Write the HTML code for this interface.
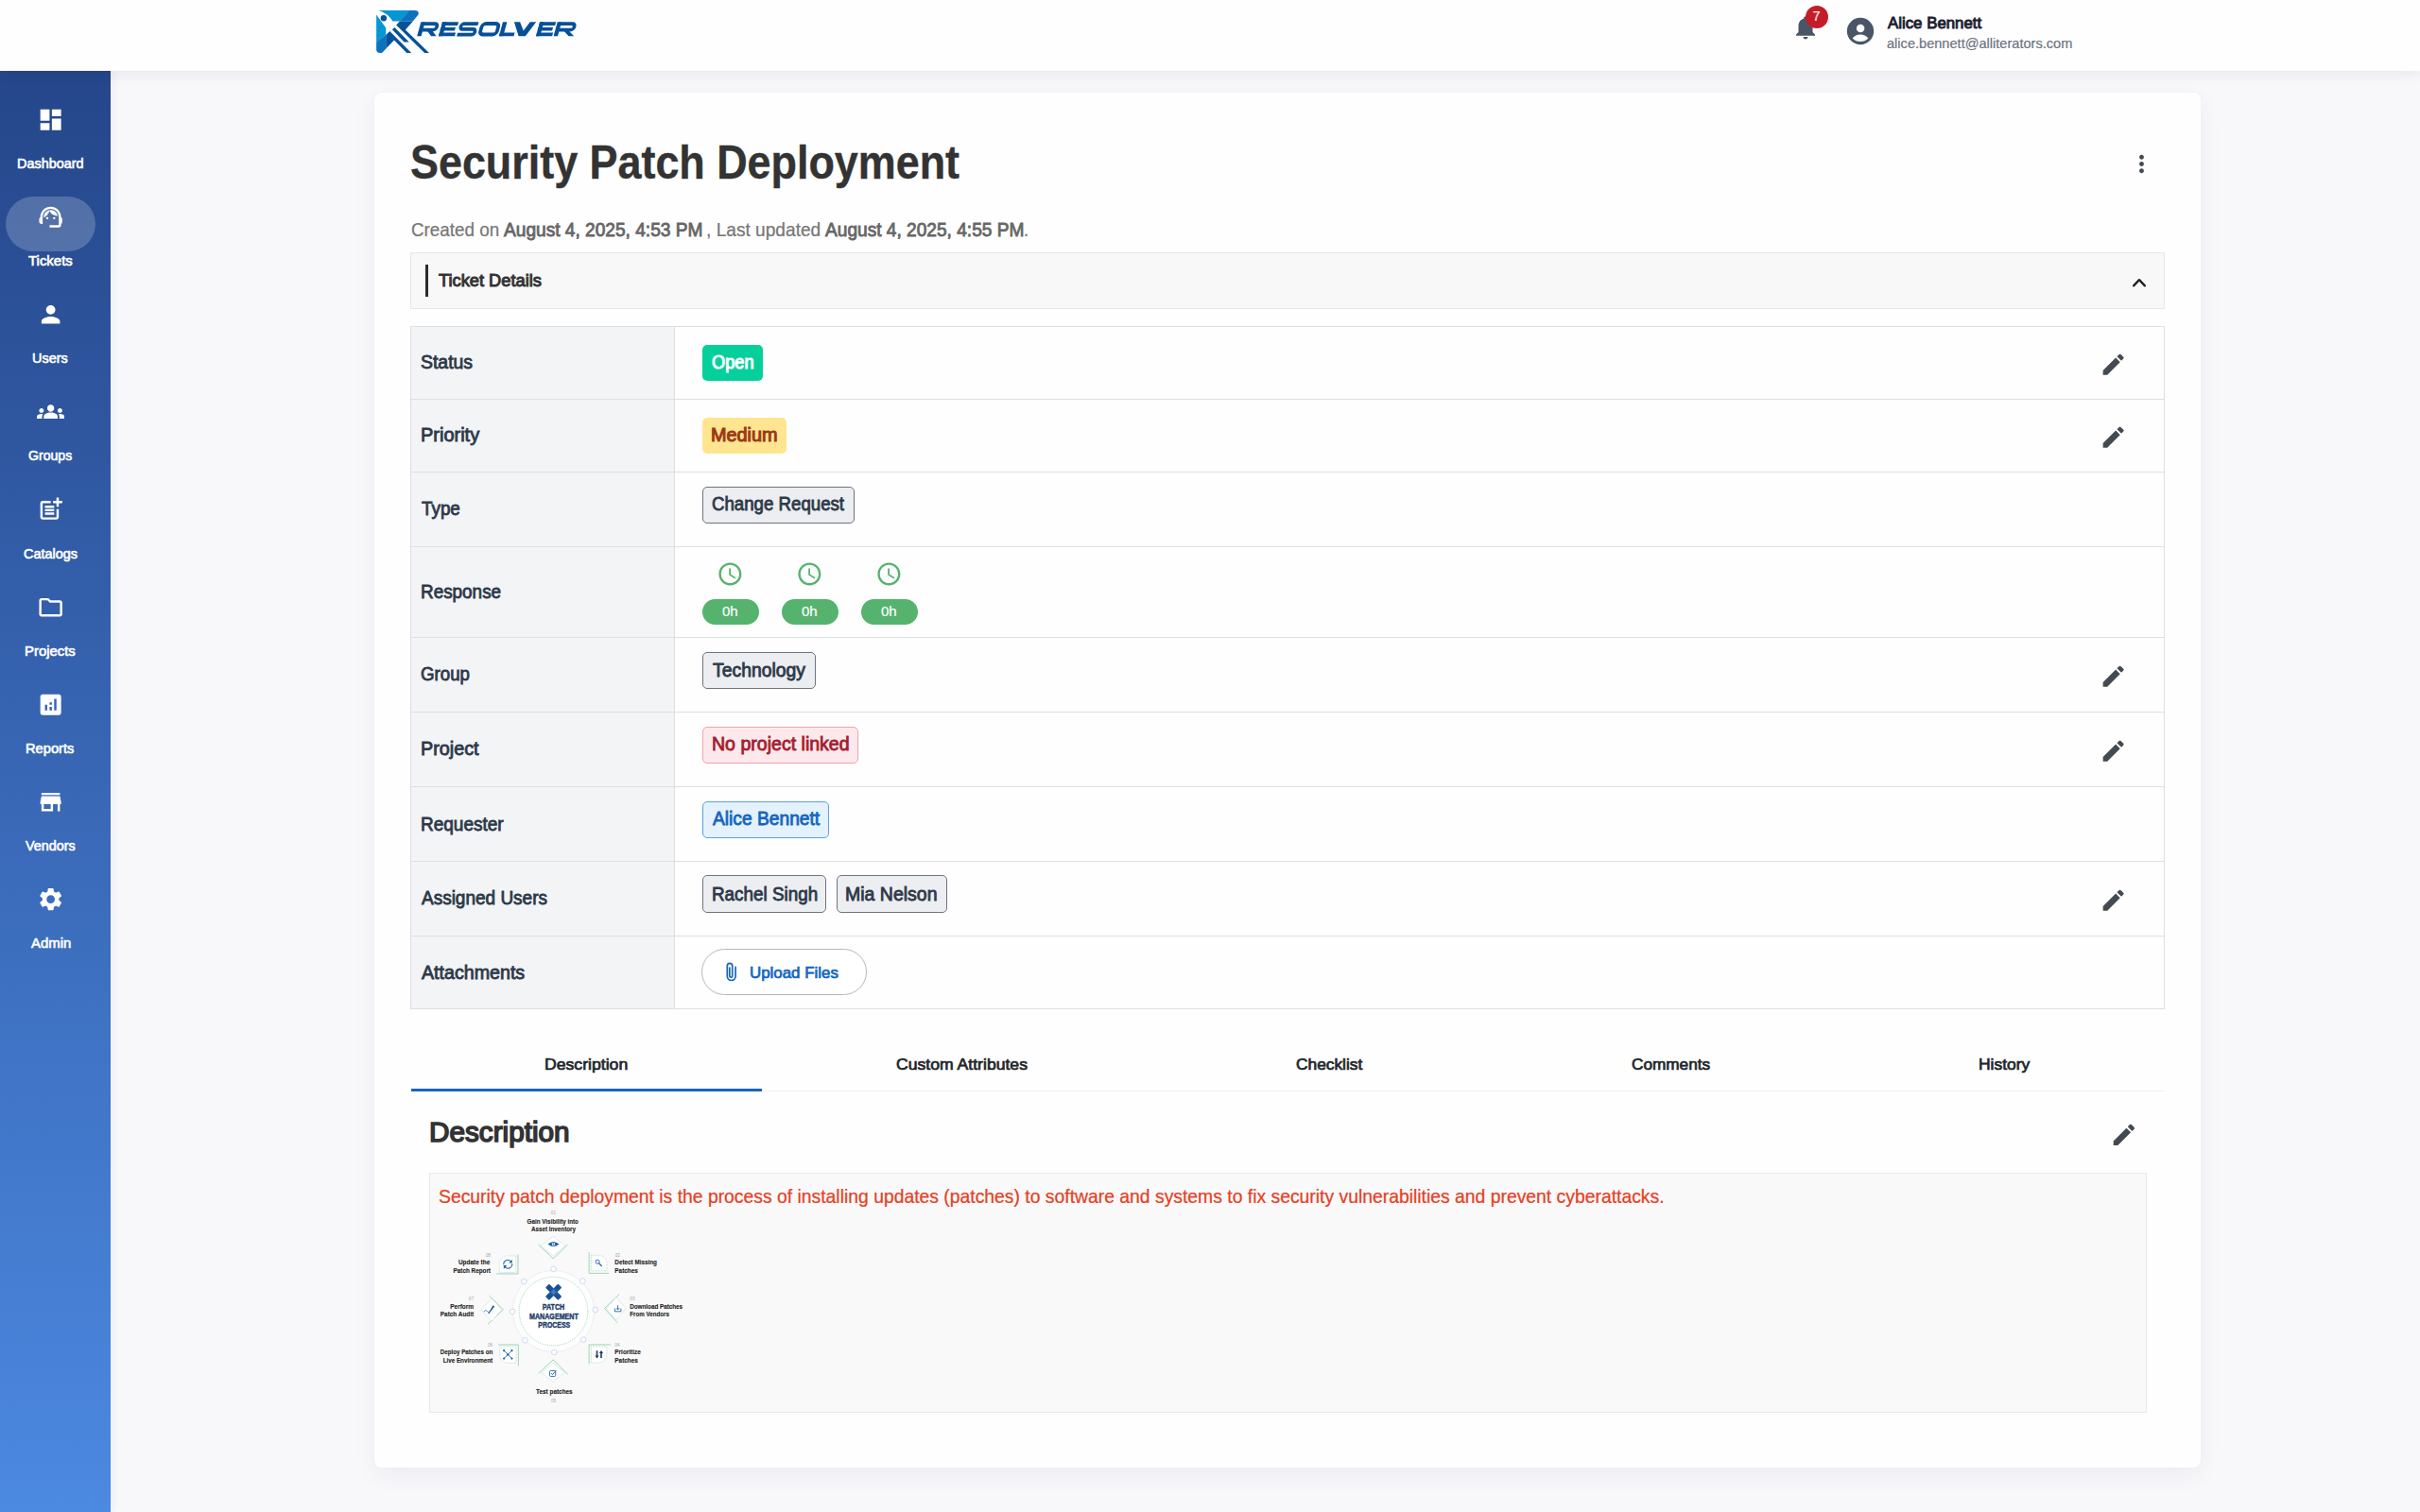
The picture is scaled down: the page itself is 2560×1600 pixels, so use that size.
<!DOCTYPE html>
<html lang="en">
<head>
<meta charset="utf-8">
<title>Security Patch Deployment - Resolver</title>
<style>
*{box-sizing:border-box}
html,body{margin:0;padding:0}
body{width:2560px;height:1600px;overflow:hidden;background:#f8f8fb;font-family:"Liberation Sans",sans-serif;position:relative}
.t{position:absolute;white-space:nowrap;line-height:1;display:block;transform-origin:0 0}
.abs{position:absolute}
header{position:absolute;left:0;top:0;width:2560px;height:74.5px;background:#fefefe;box-shadow:0 3px 14px rgba(40,40,70,.085);z-index:3}
nav{position:absolute;left:0;top:74px;width:116.5px;height:1526px;background:linear-gradient(180deg,#25468a 0%,#4c89e1 100%);box-shadow:2px 0 8px rgba(40,40,70,.06);z-index:2}
nav svg{position:absolute;left:38.8px;width:29.3px;height:29.3px;fill:#fff}
.pill{position:absolute;left:6px;top:134px;width:95px;height:58px;border-radius:29px;background:rgba(255,255,255,.2)}
main{position:absolute;left:396px;top:98px;width:1932px;height:1455px;background:#fefefe;border-radius:8px;box-shadow:0 8px 24px rgba(60,60,100,.06),0 0 4px rgba(60,60,100,.025);z-index:1}
.pg{position:absolute;left:0;top:0;width:2560px;height:1600px}
.ln{position:absolute;background:#dddfe3}
.th{position:absolute;left:435px;width:278px;background:#f3f4f6}
.bdg{position:absolute;border-radius:5px}
.sec{background:#eceef1;border:1px solid #6f757c}
.ic{position:absolute;fill:#444a51}
</style>
</head>
<body>
<header>
<svg class="abs" style="left:390px;top:4px;width:230px;height:60px" viewBox="0 0 230 60">
<path fill="#0497d4" d="M10.71,6.94 L43.45,6.94 L33.13,18.53 L25.40,18.53 Q21.03,10.52 10.71,6.94 Z"/>
<path fill="#0b72bd" d="M43.25,6.94 L48.61,6.94 Q53.97,7.14 52.46,11.51 L46.83,18.53 L32.94,18.53 Z"/>
<polygon fill="#03529b" points="32.94,18.45 46.90,18.45 38.81,27.38 63.97,52.06 59.13,52.06 29.17,22.54"/>
<polygon fill="#03529b" points="27.38,24.92 42.78,40.56 37.50,40.56 24.92,27.30"/>
<polygon fill="#0497d4" points="8.13,11.51 18.25,25.40 18.25,33.02 8.13,40.95"/>
<path fill="#0b72bd" d="M8.13,40.87 L18.25,32.94 L18.33,47.50 L14.09,51.98 L11.90,51.98 Q8.13,51.98 8.13,48.21 Z"/>
<polygon fill="#03529b" points="18.25,32.94 22.30,29.09 45.16,52.06 40.28,52.06 26.98,38.41 18.25,47.54"/>
<circle fill="#03529b" cx="15.87" cy="15.28" r="3.17"/>
<g transform="translate(55.3,19.3) skewX(-15.4)" fill="none" stroke="#06509b" stroke-linejoin="miter"><path d="M2.20,0 V14.90" stroke-width="4.4"/><path d="M2.20,1.85 H15.30 a2.9,2.9 0 0 1 2.9,2.9 v0.7 a2.9,2.9 0 0 1 -2.9,2.9 H2.20" stroke-width="3.7"/><polygon fill="#06509b" stroke="none" points="8.00,8.2 13.30,8.2 20.50,14.90 14.90,14.90"/><path d="M24.90,0 V14.90" stroke-width="4.4"/><path d="M22.70,1.85 H39.80 M22.70,7.45 H38.20 M22.70,13.05 H39.80" stroke-width="3.7"/><path d="M61.10,1.85 H46.20 a2.7,2.7 0 0 0 -2.7,2.7 v0.35 a2.7,2.7 0 0 0 2.7,2.7 H57.20 a2.7,2.7 0 0 1 2.7,2.7 v0.35 a2.7,2.7 0 0 1 -2.7,2.7 H42.00" stroke-width="3.7"/><rect x="65.60" y="1.7" width="17.60" height="11.5" rx="3.6" stroke-width="3.8"/><path d="M88.90,0 V14.90" stroke-width="4.4"/><path d="M86.70,13.05 H102.30" stroke-width="3.7"/><polygon fill="#06509b" stroke="none" points="98.6,0 104.8,0 111.0,9.2 115.4,0 121.9,0 114.6,14.9 107.4,14.9"/><path d="M128.00,0 V14.90" stroke-width="4.4"/><path d="M125.80,1.85 H142.90 M125.80,7.45 H141.30 M125.80,13.05 H142.90" stroke-width="3.7"/><path d="M146.60,0 V14.90" stroke-width="4.4"/><path d="M146.60,1.85 H160.70 a2.9,2.9 0 0 1 2.9,2.9 v0.7 a2.9,2.9 0 0 1 -2.9,2.9 H146.60" stroke-width="3.7"/><polygon fill="#06509b" stroke="none" points="152.40,8.2 157.70,8.2 165.90,14.90 160.30,14.90"/></g>
</svg>
<svg class="abs" style="left:1895.1px;top:14px;width:30px;height:30px;fill:#4a5567" viewBox="0 0 24 24"><path d="M12 22c1.1 0 2-.9 2-2h-4c0 1.1.89 2 2 2zm6-6v-5c0-3.07-1.64-5.64-4.5-6.32V4c0-.83-.67-1.5-1.5-1.5s-1.500.67-1.500 1.500v.68C7.63 5.36 6 7.92 6 11v5l-2 2v1h16v-1l-2-2z"/></svg>
<div class="abs" style="left:1910px;top:5.8px;width:24px;height:24px;border-radius:50%;background:#c51d28"></div>
<span class="t" style="left:1917.6px;top:10.0px;font-size:14.6px;color:#fbeaec;transform:scaleX(1.0000);-webkit-text-stroke:0.012em;">7</span>
<svg class="abs" style="left:1952.65px;top:18.1px;width:30px;height:30px" viewBox="0 0 30 30"><circle cx="15" cy="15" r="14.15" fill="#4a5567"/><circle cx="15.1" cy="11.9" r="4.25" fill="#fefefe"/><path d="M6.600,22.600 Q10,18.500 15,18.500 Q20,18.500 23.400,22.600 Q20,26.100 15,26.100 Q10,26.100 6.600,22.600 Z" fill="#fefefe"/></svg>
<span class="t" style="left:1997.1px;top:16.0px;font-size:17.3px;color:#1b2130;transform:scaleX(0.9741);-webkit-text-stroke:0.055em;">Alice Bennett</span><span class="t" style="left:1996.1px;top:39.0px;font-size:14.8px;color:#6b7280;transform:scaleX(0.9854);-webkit-text-stroke:0.012em;">alice.bennett@alliterators.com</span>
</header>
<nav>
  <div class="pill"></div>
  <svg style="top:37.6px" viewBox="0 0 24 24"><path d="M3 13h8V3H3v10zm0 8h8v-6H3v6zm10 0h8V11h-8v10zm0-18v6h8V3h-8z"/></svg>
  <svg style="top:140.8px" viewBox="0 0 24 24"><path d="M21 12.22C21 6.73 16.74 3 12 3c-4.69 0-9 3.65-9 9.28-.6.34-1 .98-1 1.72v2c0 1.1.9 2 2 2h1v-6.1c0-3.87 3.13-7 7-7s7 3.13 7 7V19h-8v2h8c1.1 0 2-.9 2-2v-1.22c.59-.31 1-.92 1-1.64v-2.3c0-.7-.41-1.31-1-1.62z"/><circle cx="9" cy="13" r="1"/><circle cx="15" cy="13" r="1"/><path d="M18 11.03C17.52 8.18 15.04 6 12.05 6c-3.03 0-6.29 2.51-6.03 6.45 2.47-1.01 4.33-3.21 4.86-5.89 1.31 2.63 4 4.44 7.12 4.47z"/></svg>
  <svg style="top:244.0px" viewBox="0 0 24 24"><path d="M12 12c2.21 0 4-1.79 4-4s-1.79-4-4-4-4 1.79-4 4 1.79 4 4 4zm0 2c-2.67 0-8 1.34-8 4v2h16v-2c0-2.66-5.33-4-8-4z"/></svg>
  <svg style="top:347.2px" viewBox="0 0 24 24"><path d="M12 12.75c1.63 0 3.07.39 4.24.9 1.08.48 1.76 1.56 1.76 2.73V18H6v-1.61c0-1.18.68-2.26 1.76-2.73 1.17-.52 2.61-.91 4.24-.91zM4 13c1.1 0 2-.9 2-2s-.9-2-2-2-2 .9-2 2 .9 2 2 2zm1.13 1.1c-.37-.06-.74-.1-1.13-.1-.99 0-1.93.21-2.78.58C.48 14.9 0 15.62 0 16.43V18h4.5v-1.61c0-.83.23-1.61.63-2.29zM20 13c1.1 0 2-.9 2-2s-.9-2-2-2-2 .9-2 2 .9 2 2 2zm4 3.43c0-.81-.48-1.53-1.22-1.85-.85-.37-1.79-.58-2.78-.58-.39 0-.76.04-1.13.1.4.68.63 1.46.63 2.29V18H24v-1.57zM12 6c1.66 0 3 1.34 3 3s-1.34 3-3 3-3-1.34-3-3 1.34-3 3-3z"/></svg>
  <svg style="top:450.4px" viewBox="0 0 24 24"><path d="M17 19.22H5V7h7V5H5c-1.1 0-2 .9-2 2v12c0 1.1.9 2 2 2h12c1.1 0 2-.9 2-2v-7h-2v7.22z"/><path d="M19 2h-2v3h-3c.01.01 0 2 0 2h3v2.99c.01.01 2 0 2 0V7h3V5h-3V2zM7 9h8v2H7zM7 12v2h8v-2h-3zM7 15h8v2H7z"/></svg>
  <svg style="top:553.6px" viewBox="0 0 24 24"><path d="M9.17 6l2 2H20v10H4V6h5.17M10 4H4c-1.1 0-1.99.9-1.99 2L2 18c0 1.1.9 2 2 2h16c1.1 0 2-.9 2-2V8c0-1.1-.9-2-2-2h-8l-2-2z"/></svg>
  <svg style="top:656.8px" viewBox="0 0 24 24"><path d="M19 3H5c-1.1 0-2 .9-2 2v14c0 1.1.9 2 2 2h14c1.1 0 2-.9 2-2V5c0-1.1-.9-2-2-2zM9 17H7v-5h2v5zm4 0h-2v-3h2v3zm0-5h-2v-2h2v2zm4 5h-2V7h2v10z"/></svg>
  <svg style="top:760.0px" viewBox="0 0 24 24"><path d="M20 4H4v2h16V4zm1 10v-2l-1-5H4l-1 5v2h1v6h10v-6h4v6h2v-6h1zm-9 4H6v-4h6v4z"/></svg>
  <svg style="top:863.2px" viewBox="0 0 24 24"><path d="M19.14 12.94c.04-.3.06-.61.06-.94 0-.32-.02-.64-.07-.94l2.03-1.58c.18-.14.23-.41.12-.61l-1.92-3.32c-.12-.22-.37-.29-.59-.22l-2.39.96c-.5-.38-1.03-.7-1.62-.94l-.36-2.54c-.04-.24-.24-.41-.48-.41h-3.84c-.24 0-.43.17-.47.41l-.36 2.54c-.59.24-1.13.57-1.62.94l-2.39-.96c-.22-.08-.47 0-.59.22L2.74 8.87c-.12.21-.08.47.12.61l2.03 1.58c-.05.3-.09.63-.09.94s.02.64.07.94l-2.03 1.58c-.18.14-.23.41-.12.61l1.92 3.32c.12.22.37.29.59.22l2.39-.96c.5.38 1.03.7 1.62.94l.36 2.54c.05.24.24.41.48.41h3.84c.24 0 .44-.17.47-.41l.36-2.54c.59-.24 1.13-.56 1.62-.94l2.39.96c.22.08.47 0 .59-.22l1.92-3.32c.12-.22.07-.47-.12-.61l-2.01-1.58zM12 15.6c-1.98 0-3.6-1.62-3.6-3.6s1.62-3.6 3.6-3.6 3.6 1.62 3.6 3.6-1.62 3.6-3.6 3.6z"/></svg>
<div class="pg" style="top:-74px">
<span class="t" style="left:17.8px;top:166.0px;font-size:14.8px;color:#fff;transform:scaleX(0.9741);-webkit-text-stroke:0.042em;">Dashboard</span><span class="t" style="left:30.1px;top:269.0px;font-size:14.8px;color:#fff;transform:scaleX(1.0104);-webkit-text-stroke:0.042em;">Tickets</span><span class="t" style="left:34.2px;top:372.0px;font-size:14.8px;color:#fff;transform:scaleX(0.9759);-webkit-text-stroke:0.042em;">Users</span><span class="t" style="left:30.2px;top:475.0px;font-size:14.8px;color:#fff;transform:scaleX(0.9527);-webkit-text-stroke:0.042em;">Groups</span><span class="t" style="left:24.7px;top:579.0px;font-size:14.8px;color:#fff;transform:scaleX(0.9768);-webkit-text-stroke:0.042em;">Catalogs</span><span class="t" style="left:26.1px;top:682.0px;font-size:14.8px;color:#fff;transform:scaleX(1.0067);-webkit-text-stroke:0.042em;">Projects</span><span class="t" style="left:27.3px;top:785.0px;font-size:14.8px;color:#fff;transform:scaleX(0.9920);-webkit-text-stroke:0.042em;">Reports</span><span class="t" style="left:27.2px;top:888.0px;font-size:14.8px;color:#fff;transform:scaleX(0.9706);-webkit-text-stroke:0.042em;">Vendors</span><span class="t" style="left:32.6px;top:991.0px;font-size:14.8px;color:#fff;transform:scaleX(1.0069);-webkit-text-stroke:0.042em;">Admin</span>
</div>
</nav>
<main>
<div class="pg" style="left:-396px;top:-98px">
<span class="t" style="left:434.4px;top:147.0px;font-size:50.4px;color:#333;transform:scaleX(0.8905);font-weight:700;-webkit-text-stroke:0.008em;">Security Patch Deployment</span>
<span class="t" style="left:435.1px;top:234.0px;font-size:19.8px;color:#777;transform:scaleX(0.9517);-webkit-text-stroke:0.012em;">Created on</span><span class="t" style="left:533.1px;top:234.0px;font-size:19.8px;color:#666;transform:scaleX(0.9664);-webkit-text-stroke:0.042em;">August 4, 2025, 4:53 PM</span><span class="t" style="left:746.8px;top:234.0px;font-size:19.8px;color:#777;transform:scaleX(0.9669);-webkit-text-stroke:0.012em;">, Last updated</span><span class="t" style="left:873.0px;top:234.0px;font-size:19.8px;color:#666;transform:scaleX(0.9664);-webkit-text-stroke:0.042em;">August 4, 2025, 4:55 PM</span><span class="t" style="left:1082.7px;top:234.0px;font-size:19.8px;color:#777;transform:scaleX(1.0000);-webkit-text-stroke:0.012em;">.</span>
<svg class="ic" style="left:2251.2px;top:159px;width:29px;height:29px" viewBox="0 0 24 24"><path d="M12 8c1.1 0 2-.9 2-2s-.9-2-2-2-2 .9-2 2 .9 2 2 2zm0 2c-1.1 0-2 .9-2 2s.9 2 2 2 2-.9 2-2-.9-2-2-2zm0 6c-1.1 0-2 .9-2 2s.9 2 2 2 2-.9 2-2-.9-2-2-2z"/></svg>

<div class="abs" style="left:434px;top:267px;width:1856px;height:60px;background:#f8f8f9;border:1px solid #e7e7ea"></div>
<div class="abs" style="left:450px;top:280px;width:3.4px;height:34px;background:#2b2b2f"></div>
<span class="t" style="left:463.6px;top:288.0px;font-size:18.4px;color:#333;transform:scaleX(0.9927);-webkit-text-stroke:0.055em;">Ticket Details</span>
<svg class="abs" style="left:2252.7px;top:291.2px;width:20px;height:16px" viewBox="0 0 20 16"><path d="M4.1 11.4 10 5.1l5.9 6.3" fill="none" stroke="#1f2226" stroke-width="2.3" stroke-linecap="round" stroke-linejoin="round"/></svg>
<div class="th" style="top:346px;height:76px"></div>
<div class="th" style="top:423px;height:76px"></div>
<div class="th" style="top:500px;height:78px"></div>
<div class="th" style="top:579px;height:95px"></div>
<div class="th" style="top:675px;height:78px"></div>
<div class="th" style="top:754px;height:78px"></div>
<div class="th" style="top:833px;height:78px"></div>
<div class="th" style="top:912px;height:78px"></div>
<div class="th" style="top:991px;height:76px"></div>
<div class="ln" style="left:434px;top:345px;width:1856px;height:1px"></div>
<div class="ln" style="left:434px;top:422px;width:1856px;height:1px"></div>
<div class="ln" style="left:434px;top:499px;width:1856px;height:1px"></div>
<div class="ln" style="left:434px;top:578px;width:1856px;height:1px"></div>
<div class="ln" style="left:434px;top:674px;width:1856px;height:1px"></div>
<div class="ln" style="left:434px;top:753px;width:1856px;height:1px"></div>
<div class="ln" style="left:434px;top:832px;width:1856px;height:1px"></div>
<div class="ln" style="left:434px;top:911px;width:1856px;height:1px"></div>
<div class="ln" style="left:434px;top:990px;width:1856px;height:1px"></div>
<div class="ln" style="left:434px;top:1067px;width:1856px;height:1px"></div>
<div class="ln" style="left:434px;top:345px;width:1px;height:723px"></div>
<div class="ln" style="left:713px;top:345px;width:1px;height:723px"></div>
<div class="ln" style="left:2289px;top:345px;width:1px;height:723px"></div>
<span class="t" style="left:445.3px;top:374.0px;font-size:19.8px;color:#2d3949;transform:scaleX(0.9812);-webkit-text-stroke:0.042em;">Status</span><span class="t" style="left:444.7px;top:451.0px;font-size:19.8px;color:#2d3949;transform:scaleX(1.0100);-webkit-text-stroke:0.042em;">Priority</span><span class="t" style="left:445.8px;top:529.0px;font-size:19.8px;color:#2d3949;transform:scaleX(0.9523);-webkit-text-stroke:0.042em;">Type</span><span class="t" style="left:444.8px;top:617.0px;font-size:19.8px;color:#2d3949;transform:scaleX(0.9552);-webkit-text-stroke:0.042em;">Response</span><span class="t" style="left:445.4px;top:704.0px;font-size:19.8px;color:#2d3949;transform:scaleX(0.9440);-webkit-text-stroke:0.042em;">Group</span><span class="t" style="left:444.7px;top:783.0px;font-size:19.8px;color:#2d3949;transform:scaleX(0.9995);-webkit-text-stroke:0.042em;">Project</span><span class="t" style="left:444.8px;top:863.0px;font-size:19.8px;color:#2d3949;transform:scaleX(0.9600);-webkit-text-stroke:0.042em;">Requester</span><span class="t" style="left:446.2px;top:941.0px;font-size:19.8px;color:#2d3949;transform:scaleX(0.9598);-webkit-text-stroke:0.042em;">Assigned Users</span><span class="t" style="left:446.2px;top:1020.0px;font-size:19.8px;color:#2d3949;transform:scaleX(0.9928);-webkit-text-stroke:0.042em;">Attachments</span>
<div class="bdg" style="left:742.8px;top:364.7px;width:64.0px;height:37.9px;background:#05d09c"></div>
<div class="bdg" style="left:742.8px;top:442.1px;width:89.3px;height:37.9px;background:#ffe58f"></div>
<div class="bdg sec" style="left:742.8px;top:514.5px;width:161.2px;height:39.4px;"></div>
<div class="bdg sec" style="left:742.8px;top:690.2px;width:120.0px;height:39.2px;"></div>
<div class="bdg" style="left:742.8px;top:768.8px;width:165.2px;height:39.7px;background:#fde9eb;border:1px solid #f0a3ac"></div>
<div class="bdg" style="left:742.8px;top:847.7px;width:134.7px;height:39.4px;background:#e3f2fd;border:1px solid #5d9fe0"></div>
<div class="bdg sec" style="left:742.8px;top:926.3px;width:131.7px;height:39.4px;"></div>
<div class="bdg sec" style="left:884.7px;top:926.3px;width:117.3px;height:39.4px;"></div>
<span class="t" style="left:752.5px;top:374.0px;font-size:19.8px;color:#fff;transform:scaleX(0.9216);-webkit-text-stroke:0.055em;">Open</span><span class="t" style="left:751.9px;top:451.0px;font-size:19.8px;color:#9c3a16;transform:scaleX(1.0033);-webkit-text-stroke:0.055em;">Medium</span><span class="t" style="left:753.1px;top:524.0px;font-size:19.8px;color:#2d3949;transform:scaleX(0.9432);-webkit-text-stroke:0.042em;">Change Request</span><span class="t" style="left:753.5px;top:700.0px;font-size:19.8px;color:#2d3949;transform:scaleX(0.9790);-webkit-text-stroke:0.042em;">Technology</span><span class="t" style="left:752.5px;top:778.0px;font-size:19.8px;color:#a51c30;transform:scaleX(0.9883);-webkit-text-stroke:0.042em;">No project linked</span><span class="t" style="left:753.9px;top:857.0px;font-size:19.8px;color:#1565c0;transform:scaleX(0.9708);-webkit-text-stroke:0.042em;">Alice Bennett</span><span class="t" style="left:752.5px;top:937.0px;font-size:19.8px;color:#2d3949;transform:scaleX(0.9531);-webkit-text-stroke:0.042em;">Rachel Singh</span><span class="t" style="left:894.3px;top:937.0px;font-size:19.8px;color:#2d3949;transform:scaleX(0.9855);-webkit-text-stroke:0.042em;">Mia Nelson</span>
<svg class="abs" style="left:758.2px;top:593.2px;width:28.8px;height:28.8px;fill:#55b36e" viewBox="0 0 24 24"><path d="M11.99 2C6.47 2 2 6.48 2 12s4.47 10 9.99 10C17.52 22 22 17.52 22 12S17.52 2 11.99 2zM12 20c-4.42 0-8-3.58-8-8s3.58-8 8-8 8 3.58 8 8-3.58 8-8 8z"/><path d="M12.5 7H11v6l5.25 3.15.75-1.23-4.5-2.67z"/></svg>
<div class="abs" style="left:742.8px;top:633.6px;width:59.8px;height:27px;background:#55b36e;border-radius:14px"></div>
<svg class="abs" style="left:842.2px;top:593.2px;width:28.8px;height:28.8px;fill:#55b36e" viewBox="0 0 24 24"><path d="M11.99 2C6.47 2 2 6.48 2 12s4.47 10 9.99 10C17.52 22 22 17.52 22 12S17.52 2 11.99 2zM12 20c-4.42 0-8-3.58-8-8s3.58-8 8-8 8 3.58 8 8-3.58 8-8 8z"/><path d="M12.5 7H11v6l5.25 3.15.75-1.23-4.5-2.67z"/></svg>
<div class="abs" style="left:826.8px;top:633.6px;width:59.8px;height:27px;background:#55b36e;border-radius:14px"></div>
<svg class="abs" style="left:926.2px;top:593.2px;width:28.8px;height:28.8px;fill:#55b36e" viewBox="0 0 24 24"><path d="M11.99 2C6.47 2 2 6.48 2 12s4.47 10 9.99 10C17.52 22 22 17.52 22 12S17.52 2 11.99 2zM12 20c-4.42 0-8-3.58-8-8s3.58-8 8-8 8 3.58 8 8-3.58 8-8 8z"/><path d="M12.5 7H11v6l5.25 3.15.75-1.23-4.5-2.67z"/></svg>
<div class="abs" style="left:910.8px;top:633.6px;width:59.8px;height:27px;background:#55b36e;border-radius:14px"></div>
<span class="t" style="left:764.4px;top:639.0px;font-size:15.0px;color:#fff;transform:scaleX(1.0005);-webkit-text-stroke:0.012em;">0h</span><span class="t" style="left:848.4px;top:639.0px;font-size:15.0px;color:#fff;transform:scaleX(1.0005);-webkit-text-stroke:0.012em;">0h</span><span class="t" style="left:932.4px;top:639.0px;font-size:15.0px;color:#fff;transform:scaleX(1.0005);-webkit-text-stroke:0.012em;">0h</span>
<div class="abs" style="left:742.4px;top:1004.2px;width:174.6px;height:48.8px;border:1px solid #b4b7bc;border-radius:25px;background:#fff"></div>
<svg class="abs" style="left:763px;top:1016px;width:20px;height:25px" viewBox="0 0 20 25"><path d="M15.1 7.400v9.700a4.400 4.400 0 0 1-8.800 0V6.100a2.700 2.700 0 0 1 5.400 0v10.600a1.450 1.450 0 0 1-2.900 0V8.200" fill="none" stroke="#1565c0" stroke-width="1.7" stroke-linecap="round"/></svg>
<span class="t" style="left:793.1px;top:1021.0px;font-size:17.3px;color:#1565c0;transform:scaleX(0.9771);-webkit-text-stroke:0.042em;">Upload Files</span>
<svg class="ic" style="left:2221.3px;top:371.1px;width:29.3px;height:29.3px" viewBox="0 0 24 24"><path d="M3 17.25V21h3.75L17.81 9.94l-3.75-3.75L3 17.25zM20.71 7.04c.39-.39.39-1.02 0-1.41l-2.34-2.34c-.39-.39-1.02-.39-1.41 0l-1.83 1.83 3.75 3.75 1.83-1.83z"/></svg>
<svg class="ic" style="left:2221.3px;top:448.1px;width:29.3px;height:29.3px" viewBox="0 0 24 24"><path d="M3 17.25V21h3.75L17.81 9.94l-3.75-3.75L3 17.25zM20.71 7.04c.39-.39.39-1.02 0-1.41l-2.34-2.34c-.39-.39-1.02-.39-1.41 0l-1.83 1.83 3.75 3.75 1.83-1.83z"/></svg>
<svg class="ic" style="left:2221.3px;top:701.2px;width:29.3px;height:29.3px" viewBox="0 0 24 24"><path d="M3 17.25V21h3.75L17.81 9.94l-3.75-3.75L3 17.25zM20.71 7.04c.39-.39.39-1.02 0-1.41l-2.34-2.34c-.39-.39-1.02-.39-1.41 0l-1.83 1.83 3.75 3.75 1.83-1.83z"/></svg>
<svg class="ic" style="left:2221.3px;top:780.2px;width:29.3px;height:29.3px" viewBox="0 0 24 24"><path d="M3 17.25V21h3.75L17.81 9.94l-3.75-3.75L3 17.25zM20.71 7.04c.39-.39.39-1.02 0-1.41l-2.34-2.34c-.39-.39-1.02-.39-1.41 0l-1.83 1.83 3.75 3.75 1.83-1.83z"/></svg>
<svg class="ic" style="left:2221.3px;top:938.2px;width:29.3px;height:29.3px" viewBox="0 0 24 24"><path d="M3 17.25V21h3.75L17.81 9.94l-3.75-3.75L3 17.25zM20.71 7.04c.39-.39.39-1.02 0-1.41l-2.34-2.34c-.39-.39-1.02-.39-1.41 0l-1.83 1.83 3.75 3.75 1.83-1.83z"/></svg>
<div class="abs" style="left:434px;top:1154px;width:1856px;height:1px;background:#eeeef1"></div>
<div class="abs" style="left:434.7px;top:1152px;width:371.3px;height:3px;background:#1766c2"></div>
<span class="t" style="left:576.1px;top:1118.0px;font-size:17.3px;color:#212529;transform:scaleX(1.0206);-webkit-text-stroke:0.042em;">Description</span><span class="t" style="left:948.1px;top:1118.0px;font-size:17.3px;color:#212529;transform:scaleX(1.0189);-webkit-text-stroke:0.042em;">Custom Attributes</span><span class="t" style="left:1371.1px;top:1118.0px;font-size:17.3px;color:#212529;transform:scaleX(1.0027);-webkit-text-stroke:0.042em;">Checklist</span><span class="t" style="left:1725.5px;top:1118.0px;font-size:17.3px;color:#212529;transform:scaleX(0.9941);-webkit-text-stroke:0.042em;">Comments</span><span class="t" style="left:2092.7px;top:1118.0px;font-size:17.3px;color:#212529;transform:scaleX(1.0092);-webkit-text-stroke:0.042em;">History</span>
<span class="t" style="left:453.5px;top:1183.0px;font-size:29.7px;color:#333;transform:scaleX(1.0002);-webkit-text-stroke:0.055em;">Description</span>
<svg class="ic" style="left:2231.5px;top:1185.6px;width:29.8px;height:29.8px" viewBox="0 0 24 24"><path d="M3 17.25V21h3.75L17.81 9.94l-3.75-3.75L3 17.25zM20.71 7.04c.39-.39.39-1.02 0-1.41l-2.34-2.34c-.39-.39-1.02-.39-1.41 0l-1.83 1.83 3.75 3.75 1.83-1.83z"/></svg>
<div class="abs" style="left:454px;top:1241px;width:1817px;height:254px;background:#f9f9fa;border:1px solid #e9e9ec"></div>
<span class="t" style="left:464.0px;top:1257.0px;font-size:19.8px;color:#e6401f;transform:scaleX(0.9778);-webkit-text-stroke:0.012em;">Security patch deployment is the process of installing updates (patches) to software and systems to fix security vulnerabilities and prevent cyberattacks.</span>
<svg class="abs" style="left:455px;top:1270px;width:280px;height:225px;font-family:'Liberation Sans',sans-serif" viewBox="0 0 1882 1512">
<circle cx="877" cy="790" r="290" fill="#fdfdfe" stroke="#e2e2e8" stroke-width="3.5"/>
<circle cx="877" cy="790" r="244" fill="#fff" stroke="#62c088" stroke-width="4.6" stroke-dasharray="6 8"/>
<circle cx="877" cy="490" r="19" fill="#fff" stroke="#a8c2e4" stroke-width="4"/>
<circle cx="1085" cy="575" r="19" fill="#fff" stroke="#a8c2e4" stroke-width="4"/>
<circle cx="1175" cy="780" r="19" fill="#fff" stroke="#a8c2e4" stroke-width="4"/>
<circle cx="1090" cy="992" r="19" fill="#fff" stroke="#a8c2e4" stroke-width="4"/>
<circle cx="883" cy="1082" r="19" fill="#fff" stroke="#a8c2e4" stroke-width="4"/>
<circle cx="675" cy="997" r="19" fill="#fff" stroke="#a8c2e4" stroke-width="4"/>
<circle cx="585" cy="792" r="19" fill="#fff" stroke="#a8c2e4" stroke-width="4"/>
<circle cx="668" cy="578" r="19" fill="#fff" stroke="#a8c2e4" stroke-width="4"/>
<g transform="translate(878,653)"><g fill="#1b549a"><rect x="-64" y="-19" width="128" height="38" rx="7" transform="rotate(45)"/><rect x="-64" y="-19" width="128" height="38" rx="7" transform="rotate(-45)"/></g><rect x="-17" y="-17" width="34" height="34" fill="#2e6cb4" transform="rotate(45)"/><g fill="#9fd8c0"><circle cx="0" cy="-8" r="3"/><circle cx="0" cy="8" r="3"/><circle cx="-8" cy="0" r="3"/><circle cx="8" cy="0" r="3"/></g><g fill="#0f3e7c"><circle cx="-30" cy="-30" r="3.5"/><circle cx="-38" cy="-22" r="3"/><circle cx="-22" cy="-38" r="3"/><circle cx="30" cy="30" r="3.5"/><circle cx="38" cy="22" r="3"/><circle cx="22" cy="38" r="3"/><circle cx="30" cy="-30" r="3.5"/><circle cx="38" cy="-22" r="3"/><circle cx="22" cy="-38" r="3"/><circle cx="-30" cy="30" r="3.5"/><circle cx="-38" cy="22" r="3"/><circle cx="-22" cy="38" r="3"/></g></g>
<text x="877" y="778" text-anchor="middle" font-size="56" font-weight="700" fill="#1d3c68" stroke="#1d3c68" stroke-width="2.6" textLength="158" lengthAdjust="spacingAndGlyphs">PATCH</text>
<text x="880" y="845" text-anchor="middle" font-size="56" font-weight="700" fill="#1d3c68" stroke="#1d3c68" stroke-width="2.6" textLength="348" lengthAdjust="spacingAndGlyphs">MANAGEMENT</text>
<text x="882" y="908" text-anchor="middle" font-size="56" font-weight="700" fill="#1d3c68" stroke="#1d3c68" stroke-width="2.6" textLength="228" lengthAdjust="spacingAndGlyphs">PROCESS</text>
<text x="877" y="103" text-anchor="middle" font-size="32" fill="#a6a6ab">01</text>
<text x="872" y="165" text-anchor="middle" font-size="46" font-weight="700" fill="#1f1f24" stroke="#1f1f24" stroke-width="0.9" textLength="365" lengthAdjust="spacingAndGlyphs">Gain Visibility into</text>
<text x="877" y="220" text-anchor="middle" font-size="46" font-weight="700" fill="#1f1f24" stroke="#1f1f24" stroke-width="0.9" textLength="317" lengthAdjust="spacingAndGlyphs">Asset Inventory</text>
<path fill="none" stroke="#7fca9e" stroke-width="5" d="M770,315 L875,415 L980,315"/>
<path fill="#fff" stroke="#5fbd85" stroke-width="3.6" stroke-dasharray="4 6" d="M875,258 L962,322 L875,396 L788,322 Z"/>
<g transform="translate(877,313)"><path fill="#1f5fa8" d="M-40,0 Q0,-34 40,0 Q0,34 -40,0 Z"/><circle r="11" fill="#fff"/><circle r="5.5" fill="#1f5fa8"/></g>
<text x="1315" y="400" text-anchor="start" font-size="32" fill="#a6a6ab">02</text>
<text x="1313" y="460" text-anchor="start" font-size="46" font-weight="700" fill="#1f1f24" stroke="#1f1f24" stroke-width="0.9" textLength="300" lengthAdjust="spacingAndGlyphs">Detect Missing</text>
<text x="1313" y="515" text-anchor="start" font-size="46" font-weight="700" fill="#1f1f24" stroke="#1f1f24" stroke-width="0.9" textLength="165" lengthAdjust="spacingAndGlyphs">Patches</text>
<path fill="none" stroke="#7fca9e" stroke-width="5" d="M1130,370 V520 H1270"/>
<path fill="#fff" stroke="#5fbd85" stroke-width="3.6" stroke-dasharray="4 6" d="M1146,392 H1200 A56,56 0 0 1 1256,448 V502 H1146 Z"/>
<g transform="translate(1197,445)" fill="none" stroke="#1f5fa8"><circle cx="-7" cy="-7" r="14" stroke-width="6"/><path d="M4,4 L22,22" stroke-width="8" stroke-linecap="round"/></g>
<text x="1420" y="715" text-anchor="start" font-size="32" fill="#a6a6ab">03</text>
<text x="1420" y="773" text-anchor="start" font-size="46" font-weight="700" fill="#1f1f24" stroke="#1f1f24" stroke-width="0.9" textLength="375" lengthAdjust="spacingAndGlyphs">Download Patches</text>
<text x="1420" y="828" text-anchor="start" font-size="46" font-weight="700" fill="#1f1f24" stroke="#1f1f24" stroke-width="0.9" textLength="280" lengthAdjust="spacingAndGlyphs">From Vendors</text>
<path fill="none" stroke="#7fca9e" stroke-width="5" d="M1345,670 L1240,770 L1332,872"/>
<path fill="#fff" stroke="#5fbd85" stroke-width="3.6" stroke-dasharray="4 6" d="M1322,690 L1392,770 L1322,852 L1254,770 Z"/>
<g transform="translate(1335,772)" stroke="#1f5fa8" fill="none" stroke-width="6"><path d="M-22,-2 V20 H22 V-2" stroke-linejoin="round"/><path d="M0,-24 V6 M-10,-4 L0,8 L10,-4" stroke-width="6"/></g>
<text x="1313" y="1040" text-anchor="start" font-size="32" fill="#a6a6ab">04</text>
<text x="1313" y="1098" text-anchor="start" font-size="46" font-weight="700" fill="#1f1f24" stroke="#1f1f24" stroke-width="0.9" textLength="184" lengthAdjust="spacingAndGlyphs">Prioritize</text>
<text x="1313" y="1153" text-anchor="start" font-size="46" font-weight="700" fill="#1f1f24" stroke="#1f1f24" stroke-width="0.9" textLength="165" lengthAdjust="spacingAndGlyphs">Patches</text>
<path fill="none" stroke="#7fca9e" stroke-width="5" d="M1130,1166 V1028 H1285"/>
<path fill="#fff" stroke="#5fbd85" stroke-width="3.6" stroke-dasharray="4 6" d="M1146,1042 H1256 V1100 A56,56 0 0 1 1200,1156 H1146 Z"/>
<g transform="translate(1203,1097)" fill="#1d3c68"><path d="M-22,-26 h11 v34 h9 l-14.500,20 l-14.500,-20 h9 z"/><path d="M8,26 h11 v-34 h9 l-14.500,-20 l-14.500,20 h9 z"/></g>
<text x="883" y="1375" text-anchor="middle" font-size="46" font-weight="700" fill="#1f1f24" stroke="#1f1f24" stroke-width="0.9" textLength="260" lengthAdjust="spacingAndGlyphs">Test patches</text>
<text x="878" y="1435" text-anchor="middle" font-size="32" fill="#a6a6ab">05</text>
<path fill="none" stroke="#7fca9e" stroke-width="5" d="M772,1232 L875,1135 L980,1240"/>
<path fill="#fff" stroke="#5fbd85" stroke-width="3.6" stroke-dasharray="4 6" d="M875,1160 L957,1226 L875,1292 L793,1226 Z"/>
<g transform="translate(872,1233)" fill="none" stroke="#1f5fa8" stroke-width="6"><rect x="-22" y="-20" width="42" height="40" rx="7"/><path d="M-10,-2 L-2,8 L24,-22" stroke-width="6.500"/></g>
<text x="445" y="1040" text-anchor="end" font-size="32" fill="#a6a6ab">06</text>
<text x="445" y="1098" text-anchor="end" font-size="46" font-weight="700" fill="#1f1f24" stroke="#1f1f24" stroke-width="0.9" textLength="372" lengthAdjust="spacingAndGlyphs">Deploy Patches on</text>
<text x="445" y="1153" text-anchor="end" font-size="46" font-weight="700" fill="#1f1f24" stroke="#1f1f24" stroke-width="0.9" textLength="353" lengthAdjust="spacingAndGlyphs">Live Environment</text>
<path fill="none" stroke="#7fca9e" stroke-width="5" d="M485,1028 H628 V1180"/>
<path fill="#fff" stroke="#5fbd85" stroke-width="3.6" stroke-dasharray="4 6" d="M496,1042 H612 V1158 H552 A56,56 0 0 1 496,1102 Z"/>
<g transform="translate(553,1098)" fill="#1f5fa8"><path d="M-26,-26 L26,26 M26,-26 L-26,26" fill="none" stroke="#1f5fa8" stroke-width="6"/><circle r="8"/><circle cx="-28" cy="-28" r="7.500"/><circle cx="28" cy="-28" r="7.500"/><circle cx="-28" cy="28" r="7.500"/><circle cx="28" cy="28" r="7.500"/></g>
<text x="310" y="715" text-anchor="end" font-size="32" fill="#a6a6ab">07</text>
<text x="310" y="773" text-anchor="end" font-size="46" font-weight="700" fill="#1f1f24" stroke="#1f1f24" stroke-width="0.9" textLength="167" lengthAdjust="spacingAndGlyphs">Perform</text>
<text x="310" y="828" text-anchor="end" font-size="46" font-weight="700" fill="#1f1f24" stroke="#1f1f24" stroke-width="0.9" textLength="237" lengthAdjust="spacingAndGlyphs">Patch Audit</text>
<path fill="none" stroke="#7fca9e" stroke-width="5" d="M420,680 L520,778 L410,882"/>
<path fill="#fff" stroke="#5fbd85" stroke-width="3.6" stroke-dasharray="4 6" d="M440,700 L507,780 L440,862 L364,780 Z"/>
<g transform="translate(425,782)"><path fill="#1f5fa8" d="M-6,26 L-12,30 L-10,20 L22,-34 L34,-27 Z"/><path d="M-44,10 Q-30,-6 -18,8 T-2,12" fill="none" stroke="#1f5fa8" stroke-width="5"/></g>
<text x="430" y="400" text-anchor="end" font-size="32" fill="#a6a6ab">08</text>
<text x="425" y="460" text-anchor="end" font-size="46" font-weight="700" fill="#1f1f24" stroke="#1f1f24" stroke-width="0.9" textLength="224" lengthAdjust="spacingAndGlyphs">Update the</text>
<text x="430" y="515" text-anchor="end" font-size="46" font-weight="700" fill="#1f1f24" stroke="#1f1f24" stroke-width="0.9" textLength="265" lengthAdjust="spacingAndGlyphs">Patch Report</text>
<path fill="none" stroke="#7fca9e" stroke-width="5" d="M625,385 V524 H472"/>
<path fill="#fff" stroke="#5fbd85" stroke-width="3.6" stroke-dasharray="4 6" d="M610,396 V514 H492 V452 A56,56 0 0 1 548,396 Z"/>
<g transform="translate(553,455)" fill="none" stroke="#1f5fa8" stroke-width="7"><path d="M-30,4 A30,30 0 0 1 22,-20"/><path d="M30,-4 A30,30 0 0 1 -22,20"/><path fill="#1f5fa8" stroke="none" d="M30,-34 V-8 H6 Z M-30,34 V8 H-6 Z"/></g>
</svg>
</div>
</main>
</body>
</html>
